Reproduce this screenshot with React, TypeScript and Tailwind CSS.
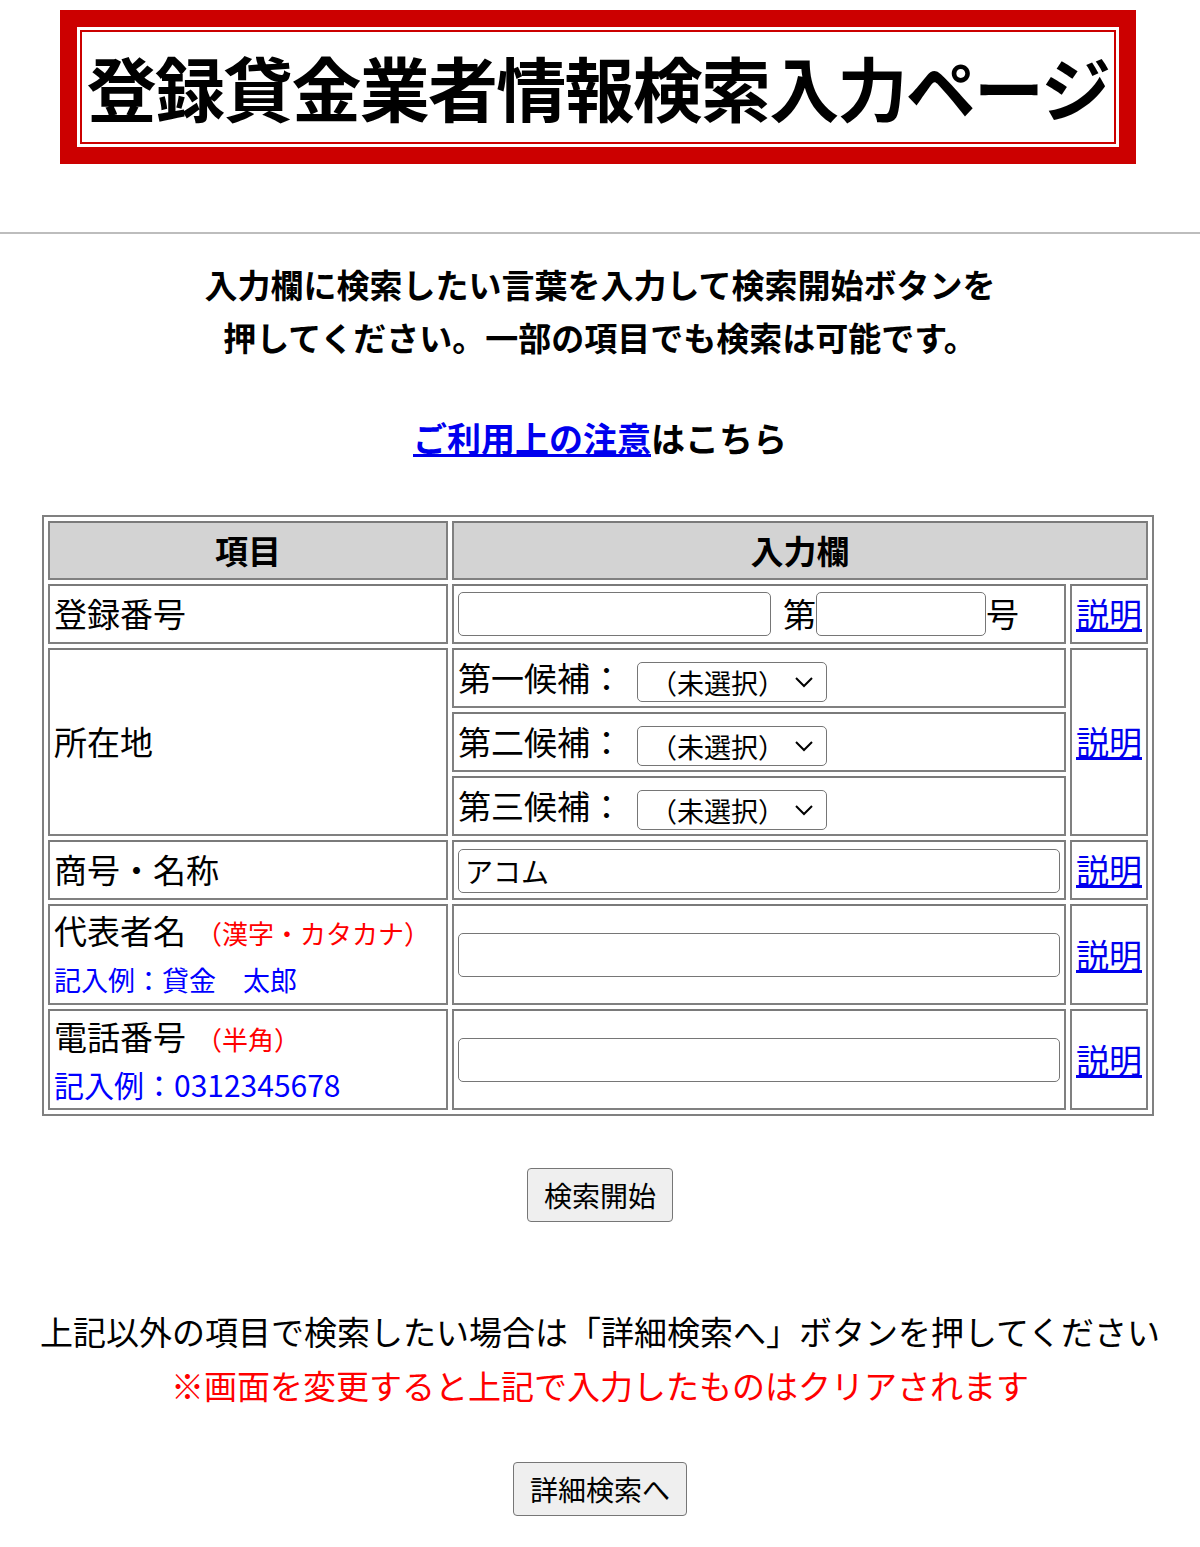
const font = { fontFamily: '"Noto Sans CJK JP", "Noto Sans", sans-serif' };

function Sel() {
  return (
    <div className="inline-flex items-center justify-between w-[190px] h-[40px] border border-[#767676] rounded-[5px] bg-white px-[12px] text-[27px] leading-none align-middle">
      <span>（未選択）</span>
      <svg width="20" height="12" viewBox="0 0 20 12"><path d="M2 2l8 8 8-8" fill="none" stroke="#000" strokeWidth="2" /></svg>
    </div>
  );
}

function Link() {
  return <a href="#" className="text-[#0000ee] underline text-[33px]">説明</a>;
}

const cell = 'border-2 border-[#808080] border-t-[#7a7a7a] p-0';

export default function App() {
  return (
    <div className="bg-white text-black w-[1200px]" style={font}>
      <div className="pl-[60px] pr-[64px] pt-[10px]">
        <div className="bg-[#cc0000] p-[17px]">
          <div className="bg-white p-[3px]">
            <div className="border-2 border-[#cc0000] h-[114px] flex items-center justify-center">
              <h1 className="text-[70px] font-bold tracking-tight leading-none whitespace-nowrap">登録貸金業者情報検索入力ページ</h1>
            </div>
          </div>
        </div>
      </div>
      <hr className="mt-[68px] border-t-2 border-[#bdbdbd]" />
      <p className="text-center font-bold text-[33px] leading-[53px] mt-[24px]">
        入力欄に検索したい言葉を入力して検索開始ボタンを<br />押してください。一部の項目でも検索は可能です。
      </p>
      <p className="text-center font-bold text-[34px] mt-[48px]">
        <a href="#" className="text-[#0000ee] underline">ご利用上の注意</a>はこちら
      </p>
      <div className="pl-[42px] pr-[46px] mt-[52px]">
        <table className="w-full border-2 border-[#808080] border-separate border-spacing-[4px] text-[33px]">
          <colgroup><col className="w-[400px]" /><col /><col className="w-[78px]" /></colgroup>
          <tbody>
            <tr className="h-[59px]">
              <th className={`${cell} bg-[#d3d3d3]`}>項目</th>
              <th className={`${cell} bg-[#d3d3d3]`} colSpan={2}>入力欄</th>
            </tr>
            <tr className="h-[60px]">
              <td className={`${cell} px-[4px]`}>登録番号</td>
              <td className={`${cell} px-[4px]`}>
                <div className="flex items-center">
                  <input className="w-[313px] h-[44px] border border-[#767676] rounded-[5px]" />
                  <span className="ml-[12px]">第</span>
                  <input className="w-[170px] h-[44px] border border-[#767676] rounded-[5px]" />
                  <span>号</span>
                </div>
              </td>
              <td className={`${cell} text-center`}><Link /></td>
            </tr>
            <tr className="h-[60px]">
              <td className={`${cell} px-[4px]`} rowSpan={3}>所在地</td>
              <td className={`${cell} px-[4px]`}>第一候補：<span className="ml-[14px]"><Sel /></span></td>
              <td className={`${cell} text-center`} rowSpan={3}><Link /></td>
            </tr>
            <tr className="h-[60px]">
              <td className={`${cell} px-[4px]`}>第二候補：<span className="ml-[14px]"><Sel /></span></td>
            </tr>
            <tr className="h-[60px]">
              <td className={`${cell} px-[4px]`}>第三候補：<span className="ml-[14px]"><Sel /></span></td>
            </tr>
            <tr className="h-[60px]">
              <td className={`${cell} px-[4px]`}>商号・名称</td>
              <td className={`${cell} px-[4px]`}>
                <input defaultValue="アコム" className="w-full h-[44px] border border-[#767676] rounded-[5px] px-[6px] text-[28px]" />
              </td>
              <td className={`${cell} text-center`}><Link /></td>
            </tr>
            <tr className="h-[101px]">
              <td className={`${cell} px-[4px] leading-[44px]`}>
                代表者名<span className="text-[#ff0000] text-[26px] ml-[10px]">（漢字・カタカナ）</span><br />
                <span className="text-[#0000ff] text-[27px]">記入例：貸金　太郎</span>
              </td>
              <td className={`${cell} px-[4px]`}>
                <input className="w-full h-[44px] border border-[#767676] rounded-[5px]" />
              </td>
              <td className={`${cell} text-center`}><Link /></td>
            </tr>
            <tr className="h-[101px]">
              <td className={`${cell} px-[4px] leading-[44px]`}>
                電話番号<span className="text-[#ff0000] text-[26px] ml-[10px]">（半角）</span><br />
                <span className="text-[#0000ff] text-[30px]">記入例：0312345678</span>
              </td>
              <td className={`${cell} px-[4px]`}>
                <input className="w-full h-[44px] border border-[#767676] rounded-[5px]" />
              </td>
              <td className={`${cell} text-center`}><Link /></td>
            </tr>
          </tbody>
        </table>
      </div>
      <div className="flex justify-center mt-[52px]">
        <button className="h-[54px] px-[16px] border border-[#767676] rounded-[4px] bg-[#efefef] text-[28px]">検索開始</button>
      </div>
      <p className="text-center text-[33px] mt-[82px] leading-[54px]">
        上記以外の項目で検索したい場合は「詳細検索へ」ボタンを押してください<br />
        <span className="text-[#ff0000]">※画面を変更すると上記で入力したものはクリアされます</span>
      </p>
      <div className="flex justify-center mt-[50px] pb-[16px]">
        <button className="h-[54px] px-[16px] border border-[#767676] rounded-[4px] bg-[#efefef] text-[28px]">詳細検索へ</button>
      </div>
    </div>
  );
}
